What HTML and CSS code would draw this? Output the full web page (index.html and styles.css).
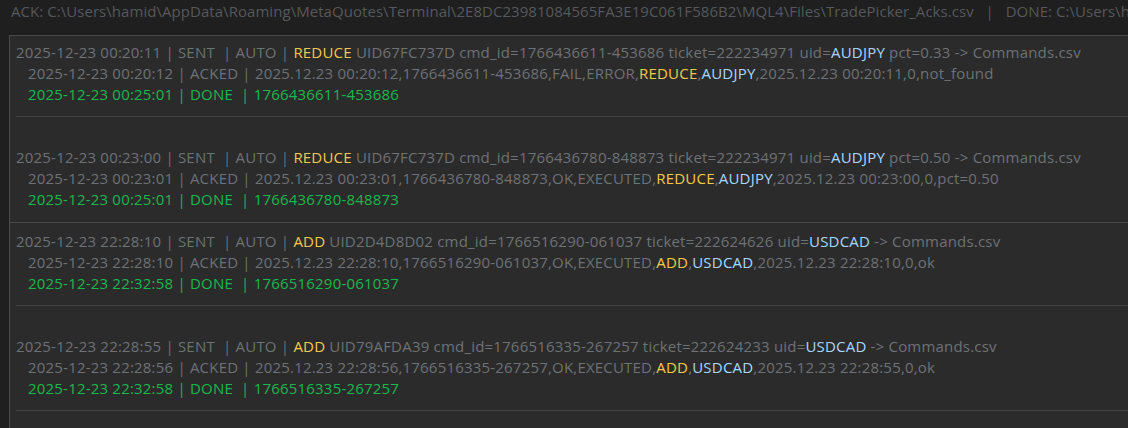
FILE: index.html
```html
<!DOCTYPE html>
<html>
<head>
<meta charset="utf-8">
<link rel="stylesheet" href="styles.css">
</head>
<body>
<div class="header">ACK: C:\Users\hamid\AppData\Roaming\MetaQuotes\Terminal\2E8DC23981084565FA3E19C061F586B2\MQL4\Files\TradePicker_Acks.csv &nbsp; | &nbsp; DONE: C:\Users\hamid</div>
<div class="log">
  <div class="card">
    <div class="entry first">
      <div class="line sent">2025-12-23 00:20:11 | SENT &nbsp;| AUTO | <span class="act">REDUCE</span> UID67FC737D cmd_id=1766436611-453686 ticket=222234971 uid=<span class="sym">AUDJPY</span> pct=0.33 -&gt; Commands.csv</div>
      <div class="line sub">2025-12-23 00:20:12 | ACKED | 2025.12.23 00:20:12,1766436611-453686,FAIL,ERROR,<span class="act">REDUCE</span>,<span class="sym">AUDJPY</span>,2025.12.23 00:20:11,0,not_found</div>
      <div class="line sub done">2025-12-23 00:25:01 | DONE &nbsp;| 1766436611-453686</div>
    </div>
    <hr class="sep">
    <div class="entry later last">
      <div class="line sent">2025-12-23 00:23:00 | SENT &nbsp;| AUTO | <span class="act">REDUCE</span> UID67FC737D cmd_id=1766436780-848873 ticket=222234971 uid=<span class="sym">AUDJPY</span> pct=0.50 -&gt; Commands.csv</div>
      <div class="line sub">2025-12-23 00:23:01 | ACKED | 2025.12.23 00:23:01,1766436780-848873,OK,EXECUTED,<span class="act">REDUCE</span>,<span class="sym">AUDJPY</span>,2025.12.23 00:23:00,0,pct=0.50</div>
      <div class="line sub done">2025-12-23 00:25:01 | DONE &nbsp;| 1766436780-848873</div>
    </div>
  </div>
  <div class="card">
    <div class="entry first second-card">
      <div class="line sent">2025-12-23 22:28:10 | SENT &nbsp;| AUTO | <span class="act">ADD</span> UID2D4D8D02 cmd_id=1766516290-061037 ticket=222624626 uid=<span class="sym">USDCAD</span> -&gt; Commands.csv</div>
      <div class="line sub">2025-12-23 22:28:10 | ACKED | 2025.12.23 22:28:10,1766516290-061037,OK,EXECUTED,<span class="act">ADD</span>,<span class="sym">USDCAD</span>,2025.12.23 22:28:10,0,ok</div>
      <div class="line sub done">2025-12-23 22:32:58 | DONE &nbsp;| 1766516290-061037</div>
    </div>
    <hr class="sep">
    <div class="entry later">
      <div class="line sent">2025-12-23 22:28:55 | SENT &nbsp;| AUTO | <span class="act">ADD</span> UID79AFDA39 cmd_id=1766516335-267257 ticket=222624233 uid=<span class="sym">USDCAD</span> -&gt; Commands.csv</div>
      <div class="line sub">2025-12-23 22:28:56 | ACKED | 2025.12.23 22:28:56,1766516335-267257,OK,EXECUTED,<span class="act">ADD</span>,<span class="sym">USDCAD</span>,2025.12.23 22:28:55,0,ok</div>
      <div class="line sub done">2025-12-23 22:32:58 | DONE &nbsp;| 1766516335-267257</div>
    </div>
    <hr class="sep">
  </div>
</div>
</body>
</html>
```
FILE: styles.css
```css
html, body {
  margin: 0;
  padding: 0;
  background: #1f1f1f;
  overflow: hidden;
  height: 428px;
}
body {
  font-family: "Open Sans", "Noto Sans", sans-serif;
  font-size: 15px;
  letter-spacing: 0.2px;
  color: #6e7175;
}
.header {
  height: 24px;
  line-height: 22px;
  padding-left: 11px;
  white-space: nowrap;
  overflow: hidden;
  letter-spacing: 0.05px;
  color: #55585c;
}
.log {
  margin-top: 11px;
  margin-left: 9px;
  background: #2b2b2b;
  border-left: 1px solid #4a4a4a;
  min-height: 400px;
}
.card {
  border-top: 1px solid #474747;
  display: flex;
  flex-direction: column;
}
.entry {
  display: flex;
  flex-direction: column;
  padding-left: 6px;
}
.entry.first { padding-top: 6px; }
.entry.second-card { padding-top: 8px; }
.entry.later { padding-top: 30px; }
.entry.last { padding-bottom: 12px; }
.line {
  height: 21px;
  line-height: 21px;
  white-space: nowrap;
}
.sub { padding-left: 12px; }
.done { color: #1ab84c; }
.act { color: #f4c84a; }
.sym { color: #a6d8ff; }
.sep {
  border: 0;
  border-top: 1px solid #444;
  margin: 11px 0 0 6px;
  height: 0;
}
```
